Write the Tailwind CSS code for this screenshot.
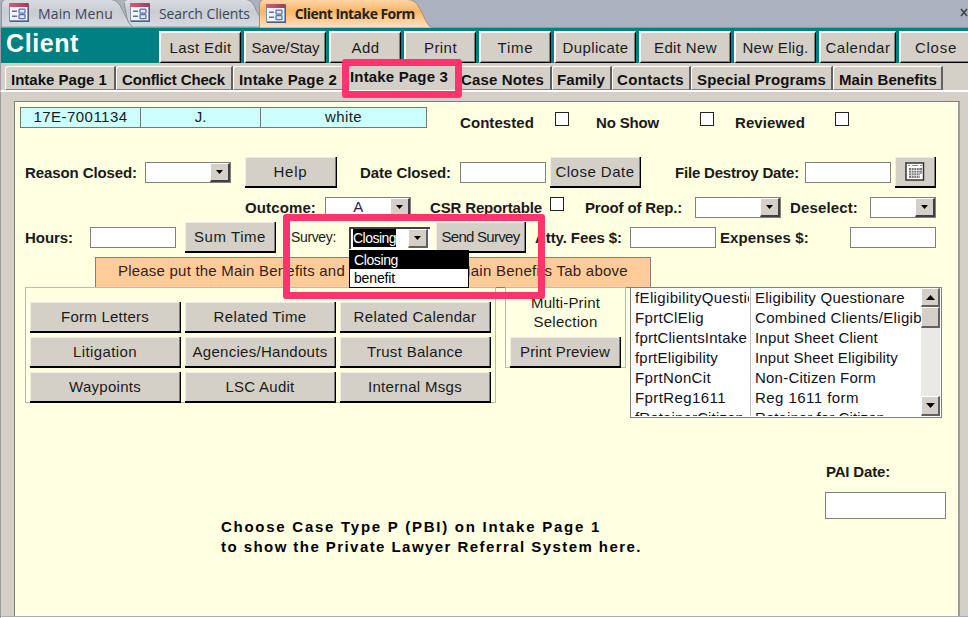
<!DOCTYPE html>
<html lang="en">
<head>
<meta charset="utf-8">
<title>Client Intake Form</title>
<script src="https://cdn.jsdelivr.net/npm/@tailwindcss/browser@4"></script>
</head>
<body class="relative w-[968px] h-[618px] overflow-hidden bg-[#d4d0c8] font-['Liberation_Sans',Arial,sans-serif] text-[15px] leading-[18px] text-[#1a1a1a] whitespace-nowrap">

<svg class="absolute" width="0" height="0">
  <defs>
    <linearGradient id="tabGray" x1="0" y1="0" x2="0" y2="1"><stop offset="0" stop-color="#d9dce1"/><stop offset=".45" stop-color="#c8ccd3"/><stop offset="1" stop-color="#d8dbe0"/></linearGradient>
    <linearGradient id="tabOrange" x1="0" y1="0" x2="0" y2="1"><stop offset="0" stop-color="#fdd6ab"/><stop offset=".4" stop-color="#fbb566"/><stop offset="1" stop-color="#fde3c0"/></linearGradient>
    <linearGradient id="iconBar" x1="0" y1="0" x2="1" y2="0"><stop offset="0" stop-color="#c9627c"/><stop offset="1" stop-color="#a03c5c"/></linearGradient>
    <symbol id="formIcon" viewBox="0 0 20 19">
      <rect x=".5" y=".5" width="18.5" height="17.5" fill="#f2f5fb" stroke="#7f8fae"/>
      <path d="M19.3 1v17.3H1" fill="none" stroke="#4d608c" stroke-width="1.4"/>
      <rect x="0" y="0" width="19.5" height="4" fill="url(#iconBar)"/>
      <path d="M3 8.2h5M3 13.2h5" stroke="#5873a8" stroke-width="1.4"/>
      <rect x="10" y="6.2" width="6" height="4" rx=".8" fill="#dfe8f7" stroke="#5873a8" stroke-width="1.3"/>
      <rect x="10" y="11.7" width="6" height="4" rx=".8" fill="#dfe8f7" stroke="#5873a8" stroke-width="1.3"/>
    </symbol>
  </defs>
</svg>

<!-- Document tabs -->
<nav class="flex h-[28px] bg-[#abb2be] border-b border-[#8e98a5] font-['Open_Sans','Noto_Sans',sans-serif] text-[14px] text-[#3f4754]">
  <div class="relative w-[123px] h-[27px] pl-[9px] flex items-center">
    <svg class="absolute left-[1px] top-0" width="134" height="27"><path d="M.5 27V4Q1-.5 5-.5H110Q117 0 121 9L127 21Q130 27 134 27Z" fill="url(#tabGray)" stroke="#8d939d"/></svg>
    <svg class="relative -top-px" width="20" height="19"><use href="#formIcon"/></svg>
    <span class="relative ml-[9px]" data-w="75">Main Menu</span>
  </div>
  <div class="relative w-[138px] h-[27px] pl-[8px] flex items-center">
    <svg class="absolute left-0 top-0" width="145" height="27"><path d="M11 27Q6 24 5 18L2.500 5Q2-.5 7-.5H124Q131 0 134 10L138 17V27Z" fill="url(#tabGray)" stroke="#8d939d"/><path d="M2.500 3Q3 1 7 .8" stroke="#f4f5f7" fill="none"/></svg>
    <svg class="relative -top-px" width="20" height="19"><use href="#formIcon"/></svg>
    <span class="relative ml-[9px]" data-w="91">Search Clients</span>
  </div>
  <div class="relative w-[172px] h-[28px] pl-[7px] flex items-center">
    <svg class="absolute left-0 top-0" width="174" height="28"><path d="M.5 28V5Q1-.5 5-.5H149Q157 0 161 9L167 21Q170 27.500 174 28Z" fill="url(#tabOrange)" stroke="#a58f78"/></svg>
    <svg class="relative -top-px" width="20" height="19"><use href="#formIcon"/></svg>
    <span class="relative ml-[9px] font-bold text-[#2a2118]" data-w="120">Client Intake Form</span>
  </div>
  <svg class="ml-[531px] mt-[8px]" width="8" height="9"><path d="M1 1l6 7M7 1L1 8" stroke="#3c434d" stroke-width="1.6"/></svg>
</nav>

<!-- Form header -->
<header class="flex h-[35px] bg-[#008080] border-l border-[#9a9da3]">
  <h1 class="w-[158px] shrink-0 pl-[5px] pt-[1px] text-[25px] leading-[28px] font-bold text-white"><span data-w="73">Client</span></h1>
  <div class="flex gap-[3px] mt-[3px] h-[32px] shrink-0">
    <button class="w-[82px] bg-[#d4d0c8] border-t-2 border-l-2 border-white border-r border-b border-r-black border-b-black shadow-[inset_-1px_-1px_0_#808080]"><span data-w="62">Last Edit</span></button>
    <button class="w-[82px] bg-[#d4d0c8] border-t-2 border-l-2 border-white border-r border-b border-r-black border-b-black shadow-[inset_-1px_-1px_0_#808080]"><span data-w="68">Save/Stay</span></button>
    <button class="w-[72px] bg-[#d4d0c8] border-t-2 border-l-2 border-white border-r border-b border-r-black border-b-black shadow-[inset_-1px_-1px_0_#808080]"><span data-w="28">Add</span></button>
    <button class="w-[72px] bg-[#d4d0c8] border-t-2 border-l-2 border-white border-r border-b border-r-black border-b-black shadow-[inset_-1px_-1px_0_#808080]"><span data-w="33">Print</span></button>
    <button class="w-[72px] bg-[#d4d0c8] border-t-2 border-l-2 border-white border-r border-b border-r-black border-b-black shadow-[inset_-1px_-1px_0_#808080]"><span data-w="36">Time</span></button>
    <button class="w-[82px] bg-[#d4d0c8] border-t-2 border-l-2 border-white border-r border-b border-r-black border-b-black shadow-[inset_-1px_-1px_0_#808080]"><span data-w="66">Duplicate</span></button>
    <button class="w-[92px] bg-[#d4d0c8] border-t-2 border-l-2 border-white border-r border-b border-r-black border-b-black shadow-[inset_-1px_-1px_0_#808080]"><span data-w="63">Edit New</span></button>
    <button class="w-[82px] bg-[#d4d0c8] border-t-2 border-l-2 border-white border-r border-b border-r-black border-b-black shadow-[inset_-1px_-1px_0_#808080]"><span data-w="66">New Elig.</span></button>
    <button class="w-[77px] bg-[#d4d0c8] border-t-2 border-l-2 border-white border-r border-b border-r-black border-b-black shadow-[inset_-1px_-1px_0_#808080]"><span data-w="65">Calendar</span></button>
    <button class="w-[72px] bg-[#d4d0c8] border-t-2 border-l-2 border-white border-b border-b-black shadow-[inset_-1px_-1px_0_#808080]"><span data-w="42">Close</span></button>
  </div>
</header>

<!-- Page tabs -->
<nav class="flex h-[29px] pt-[3px] pl-[4px] border-l border-l-[#9a9da3] border-b-2 border-b-white font-bold text-[#111]">
  <div class="w-[111px] h-[24px] rounded-tl-[3px] border-l border-t border-white border-r-2 border-r-[#606060] border-b border-b-[#808080] pl-[5px] pt-[4px]"><span data-w="96">Intake Page 1</span></div>
  <div class="w-[117px] h-[24px] rounded-tl-[3px] border-l border-t border-white border-r-2 border-r-[#606060] border-b border-b-[#808080] pl-[5px] pt-[4px]"><span data-w="103">Conflict Check</span></div>
  <div class="w-[110px] h-[24px] rounded-tl-[3px] border-l border-t border-white border-b border-b-[#808080] pl-[5px] pt-[4px]"><span data-w="98">Intake Page 2</span></div>
  <div class="w-[118px] h-[26px] pl-[7px] pt-[2px]"><span data-w="98">Intake Page 3</span></div>
  <div class="w-[91px] h-[24px] border-t border-white border-r-2 border-r-[#606060] border-b border-b-[#808080] pl-0 pt-[4px]"><span data-w="83">Case Notes</span></div>
  <div class="w-[60px] h-[24px] rounded-tl-[3px] border-l border-t border-white border-r-2 border-r-[#606060] border-b border-b-[#808080] pl-[4px] pt-[4px]"><span data-w="48">Family</span></div>
  <div class="w-[79px] h-[24px] rounded-tl-[3px] border-l border-t border-white border-r-2 border-r-[#606060] border-b border-b-[#808080] pl-[4px] pt-[4px]"><span data-w="67">Contacts</span></div>
  <div class="w-[142px] h-[24px] rounded-tl-[3px] border-l border-t border-white border-r-2 border-r-[#606060] border-b border-b-[#808080] pl-[5px] pt-[4px]"><span data-w="129">Special Programs</span></div>
  <div class="w-[110px] h-[24px] rounded-tl-[3px] border-l border-t border-white border-r-2 border-r-[#606060] border-b border-b-[#808080] pl-[5px] pt-[4px]"><span data-w="98">Main Benefits</span></div>
</nav>

<!-- Form body -->
<div class="h-[526px] pt-[9px] pl-[13px] border-l border-[#9a9da3]">
<main class="w-[946px] h-[515px] bg-[#ffffe1] border-t border-l border-[#808080] border-r-2 border-r-[#9c9c98] border-b-0 overflow-hidden">

  <div class="flex h-[55px]">
    <div class="ml-[5px] mt-[5px] flex w-[407px] h-[21px] border border-[#707878] bg-[#ccffff] text-center">
      <div class="w-[120px] border-r border-[#707878]"><span data-w="94">17E-7001134</span></div>
      <div class="w-[120px] border-r border-[#707878]">J.</div>
      <div class="w-[165px]"><span data-w="37">white</span></div>
    </div>
    <div class="flex h-[41px] items-center ml-[33px] font-bold">
      <span data-w="74">Contested</span>
      <i class="ml-[21px] mb-[7px] w-[14px] h-[14px] bg-white border border-[#222]"></i>
      <span class="ml-[27px]" data-w="63">No Show</span>
      <i class="ml-[41px] mb-[7px] w-[14px] h-[14px] bg-white border border-[#222]"></i>
      <span class="ml-[21px]" data-w="70">Reviewed</span>
      <i class="ml-[30px] mb-[7px] w-[14px] h-[14px] bg-white border border-[#222]"></i>
    </div>
  </div>

  <div class="flex h-[31px] items-center font-bold">
    <span class="ml-[10px]" data-w="112">Reason Closed:</span>
    <div class="ml-[8px] w-[86px] h-[21px] bg-white border border-[#808080] flex justify-end"><b class="w-[20px] bg-[#d4d0c8] border-r-2 border-b-2 border-[#404040] border-t border-l border-t-white border-l-white flex items-center justify-center"><svg width="7" height="4"><path d="M0 0h7L3.500 4z"/></svg></b></div>
    <button class="ml-[14px] w-[92px] h-[31px] bg-[#d4d0c8] border-r border-b-2 border-black shadow-[inset_-1px_0_0_#808080,inset_1px_1px_0_#f0eee4]"><span class="font-normal" data-w="34">Help</span></button>
    <span class="ml-[23px]" data-w="91">Date Closed:</span>
    <div class="ml-[9px] w-[86px] h-[21px] bg-white border border-[#808080]"></div>
    <button class="ml-[4px] w-[91px] h-[31px] bg-[#d4d0c8] border-r border-b-2 border-black shadow-[inset_-1px_0_0_#808080,inset_1px_1px_0_#f0eee4]"><span class="font-normal" data-w="79">Close Date</span></button>
    <span class="ml-[34px]" data-w="124">File Destroy Date:</span>
    <div class="ml-[6px] w-[86px] h-[21px] bg-white border border-[#808080]"></div>
    <button class="ml-[4px] w-[41px] h-[31px] bg-[#d4d0c8] border-r border-b-2 border-black shadow-[inset_-1px_0_0_#808080,inset_1px_1px_0_#f0eee4] flex items-center justify-center">
      <svg width="20" height="19"><rect x="1" y="1" width="17.500" height="17" fill="#fff" stroke="#333" stroke-width="1.500"/><path d="M3 3.500h2M7 3.500h6M15 3.500h2" stroke="#888"/><path d="M4 6h13v6h-2v4H4z" fill="#777"/><path d="M4 8.500h13M4 11h13M4 13.500h11M6.500 6v10M9 6v10M11.500 6v10M14 6v10" stroke="#ddd" stroke-width=".9"/></svg>
    </button>
  </div>

  <div class="flex mt-[5px] h-[29px] items-center font-bold">
    <span class="ml-[230px]" data-w="71">Outcome:</span>
    <div class="ml-[9px] w-[86px] h-[21px] bg-white border border-[#808080] flex justify-end"><span class="font-normal text-[#26264a] w-[66px] text-center">A</span><b class="w-[20px] bg-[#d4d0c8] border-r-2 border-b-2 border-[#404040] border-t border-l border-t-white border-l-white flex items-center justify-center"><svg width="7" height="4"><path d="M0 0h7L3.500 4z"/></svg></b></div>
    <span class="ml-[19px]" data-w="112">CSR Reportable</span>
    <i class="ml-[8px] mb-[7px] w-[14px] h-[14px] bg-white border border-[#222]"></i>
    <span class="ml-[21px]" data-w="97">Proof of Rep.:</span>
    <div class="ml-[13px] w-[86px] h-[21px] bg-white border border-[#808080] flex justify-end"><b class="w-[20px] bg-[#d4d0c8] border-r-2 border-b-2 border-[#404040] border-t border-l border-t-white border-l-white flex items-center justify-center"><svg width="7" height="4"><path d="M0 0h7L3.500 4z"/></svg></b></div>
    <span class="ml-[9px]" data-w="68">Deselect:</span>
    <div class="ml-[12px] w-[66px] h-[21px] bg-white border border-[#808080] flex justify-end"><b class="w-[20px] bg-[#d4d0c8] border-r-2 border-b-2 border-[#404040] border-t border-l border-t-white border-l-white flex items-center justify-center"><svg width="7" height="4"><path d="M0 0h7L3.500 4z"/></svg></b></div>
  </div>

  <div class="flex h-[31px] items-center font-bold">
    <span class="ml-[10px]" data-w="48">Hours:</span>
    <div class="ml-[17px] w-[86px] h-[21px] bg-white border border-[#808080]"></div>
    <button class="ml-[9px] w-[91px] h-[31px] bg-[#d4d0c8] border-r border-b-2 border-black shadow-[inset_-1px_0_0_#808080,inset_1px_1px_0_#f0eee4]"><span class="font-normal" data-w="72">Sum Time</span></button>
    <span class="ml-[15px] mb-[2px] font-normal text-[14px]" data-w="45">Survey:</span>
    <div class="relative ml-[13px] w-[81px] h-[22px] bg-white border-t-2 border-l-2 border-[#404040] flex justify-between font-normal text-[14px]">
      <span class="ml-[2px] h-[18px] bg-black text-white" data-w="43">Closing</span>
      <b class="mr-[2px] mb-px w-[20px] bg-[#d4d0c8] border-r-2 border-b-2 border-[#606060] border-t border-l border-t-white border-l-white flex items-center justify-center"><svg width="7" height="4"><path d="M0 0h7L3.500 4z"/></svg></b>
      <div class="absolute z-10 -left-[2px] top-[21px] w-[120px] h-[38px] border border-black bg-white text-black">
        <div class="h-[18px] pl-[4px] bg-black text-white"><span data-w="44">Closing</span></div>
        <div class="h-[18px] pl-[4px]"><span data-w="41">benefit</span></div>
      </div>
    </div>
    <button class="ml-[6px] w-[90px] h-[31px] bg-[#d4d0c8] border-r border-b-2 border-black shadow-[inset_-1px_0_0_#808080,inset_1px_1px_0_#f0eee4]"><span class="font-normal" data-w="78">Send Survey</span></button>
    <span class="ml-[9px]" data-w="87">Atty. Fees $:</span>
    <div class="ml-[8px] w-[86px] h-[21px] bg-white border border-[#808080]"></div>
    <span class="ml-[4px]" data-w="89">Expenses $:</span>
    <div class="ml-[41px] w-[86px] h-[21px] bg-white border border-[#808080]"></div>
  </div>

  <div class="ml-[80px] mt-[4px] w-[556px] h-[31px] flex pt-[4px] pl-[22px] bg-[#ffcc99] border border-[#808080] text-[#33221a]">
    <span data-w="227">Please put the Main Benefits and</span>
    <span class="ml-[113px]" data-w="170">Main Benefits Tab above</span>
  </div>

  <div class="flex items-start -mt-px">
    <section class="ml-[10px] w-[471px] h-[116px] border border-[#bcbcae] pt-[14px] pl-[4px] grid grid-cols-[151px_151px_151px] auto-rows-[31px] gap-x-[4px] gap-y-[4px]">
      <button class="bg-[#d4d0c8] border-r border-b-2 border-black shadow-[inset_-1px_0_0_#808080,inset_1px_1px_0_#f0eee4]"><span data-w="88">Form Letters</span></button>
      <button class="bg-[#d4d0c8] border-r border-b-2 border-black shadow-[inset_-1px_0_0_#808080,inset_1px_1px_0_#f0eee4]"><span data-w="93">Related Time</span></button>
      <button class="bg-[#d4d0c8] border-r border-b-2 border-black shadow-[inset_-1px_0_0_#808080,inset_1px_1px_0_#f0eee4]"><span data-w="123">Related Calendar</span></button>
      <button class="bg-[#d4d0c8] border-r border-b-2 border-black shadow-[inset_-1px_0_0_#808080,inset_1px_1px_0_#f0eee4]"><span data-w="64">Litigation</span></button>
      <button class="bg-[#d4d0c8] border-r border-b-2 border-black shadow-[inset_-1px_0_0_#808080,inset_1px_1px_0_#f0eee4]"><span data-w="135">Agencies/Handouts</span></button>
      <button class="bg-[#d4d0c8] border-r border-b-2 border-black shadow-[inset_-1px_0_0_#808080,inset_1px_1px_0_#f0eee4]"><span data-w="96">Trust Balance</span></button>
      <button class="bg-[#d4d0c8] border-r border-b-2 border-black shadow-[inset_-1px_0_0_#808080,inset_1px_1px_0_#f0eee4]"><span data-w="72">Waypoints</span></button>
      <button class="bg-[#d4d0c8] border-r border-b-2 border-black shadow-[inset_-1px_0_0_#808080,inset_1px_1px_0_#f0eee4]"><span data-w="69">LSC Audit</span></button>
      <button class="bg-[#d4d0c8] border-r border-b-2 border-black shadow-[inset_-1px_0_0_#808080,inset_1px_1px_0_#f0eee4]"><span data-w="94">Internal Msgs</span></button>
    </section>
    <section class="ml-[9px] w-[121px] h-[81px] border border-[#bcbcae] pt-[5px] px-[4px] text-center leading-[19px]">
      <p><span data-w="69">Multi-Print</span></p>
      <p><span data-w="64">Selection</span></p>
      <button class="mt-[6px] w-[111px] h-[31px] bg-[#d4d0c8] border-r border-b-2 border-black shadow-[inset_-1px_0_0_#808080,inset_1px_1px_0_#f0eee4]"><span data-w="90">Print Preview</span></button>
    </section>
    <section class="ml-[4px] w-[312px] h-[131px] flex border border-[#808080] bg-white overflow-hidden text-[#10101c]">
      <div class="w-[120px] h-[128px] pl-[4px] leading-[20px] border-r border-[#c0c0c0] overflow-hidden">
        <p class="w-[114px] overflow-hidden"><span data-w="121">fEligibilityQuestio</span></p>
        <p><span data-w="69">FprtClElig</span></p>
        <p><span data-w="112">fprtClientsIntake</span></p>
        <p><span data-w="83">fprtEligibility</span></p>
        <p><span data-w="76">FprtNonCit</span></p>
        <p><span data-w="91">FprtReg1611</span></p>
        <p><span data-w="109">fRetainerCitizen</span></p>
      </div>
      <div class="w-[170px] h-[128px] pl-[4px] leading-[20px] overflow-hidden">
        <p><span data-w="150">Eligibility Questionare</span></p>
        <p><span data-w="167">Combined Clients/Eligib</span></p>
        <p><span data-w="123">Input Sheet Client</span></p>
        <p><span data-w="143">Input Sheet Eligibility</span></p>
        <p><span data-w="121">Non-Citizen Form</span></p>
        <p><span data-w="104">Reg 1611 form</span></p>
        <p><span data-w="130">Retainer for Citizen</span></p>
      </div>
      <div class="w-[19px] h-[128px] flex flex-col bg-[#ebe9e4]">
        <b class="h-[19px] bg-[#d4d0c8] border-t border-l border-white border-r-2 border-b-2 border-r-[#606060] border-b-[#606060] flex items-center justify-center"><svg width="9" height="5"><path d="M0 5h9L4.500 0z"/></svg></b>
        <b class="h-[21px] bg-[#d4d0c8] border-t border-l border-white border-r-2 border-b-2 border-r-[#606060] border-b-[#606060]"></b>
        <b class="mt-auto h-[20px] bg-[#d4d0c8] border-t border-l border-white border-r-2 border-b-2 border-r-[#606060] border-b-[#606060] flex items-center justify-center"><svg width="9" height="5"><path d="M0 0h9L4.500 5z"/></svg></b>
      </div>
    </section>
  </div>

  <div class="mt-[45px] ml-[810px] font-bold">
    <span class="ml-px" data-w="64">PAI Date:</span>
    <div class="mt-[11px] w-[121px] h-[27px] bg-white border border-[#808080]"></div>
  </div>
  <p class="-mt-[2px] ml-[206px] font-bold text-[15px] leading-[20px] text-black"><span data-w="380">Choose Case Type P (PBI) on Intake Page 1</span><br><span data-w="421">to show the Private Lawyer Referral System here.</span></p>
</main>
<div class="-ml-[13px] h-[2px] bg-[#a9b0ba] border-b border-white"></div>
</div>

<!-- Highlight frames -->
<div class="absolute z-20 left-[342px] top-[59px] w-[120px] h-[39px] border-[7px] border-[#ff336d] rounded-[3px]"></div>
<div class="absolute z-20 left-[283px] top-[214px] w-[262px] h-[85px] border-[7px] border-[#ff336d] rounded-[3px]"></div>

<script>
  // Track each label out to its design width, again whenever its size changes.
  function fit(el) {
    el.style.display = 'inline-block';
    el.style.letterSpacing = '0.001px';
    const extra = (Number(el.dataset.w) - el.getBoundingClientRect().width) / el.textContent.length;
    el.style.letterSpacing = extra.toFixed(3) + 'px';
  }
  const labels = [...document.querySelectorAll('[data-w]')];
  const watcher = new ResizeObserver(entries => entries.forEach(e => fit(e.target)));
  labels.forEach(el => { fit(el); watcher.observe(el); });
  window.addEventListener('load', () => labels.forEach(fit));
</script>
</body>
</html>
